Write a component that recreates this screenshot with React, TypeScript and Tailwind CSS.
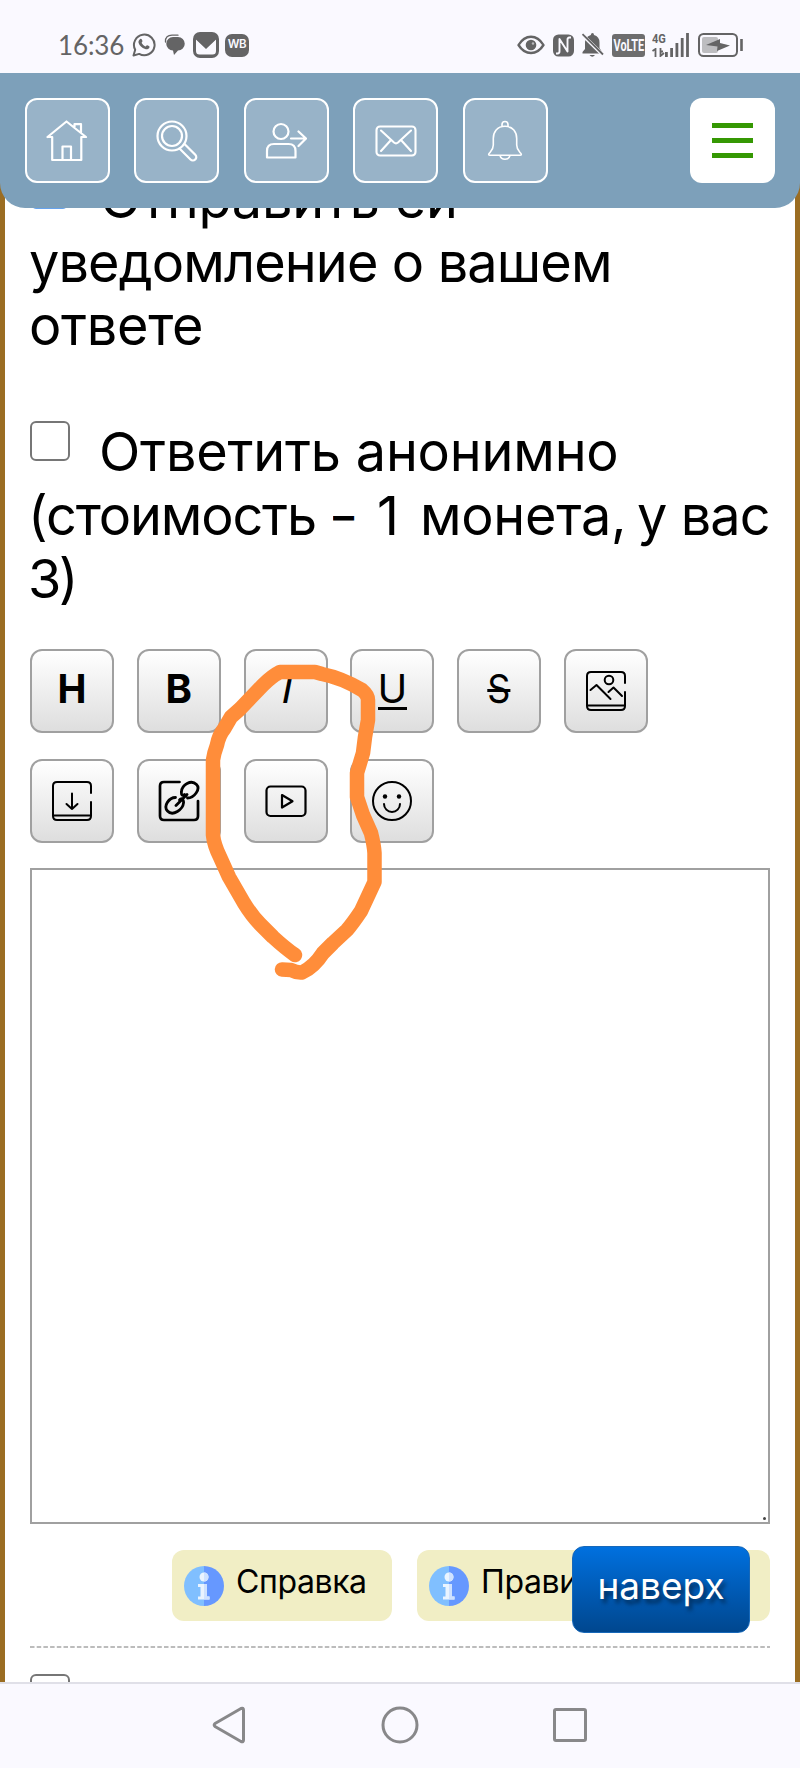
import React from "react";

const ico = {
  fill: "none",
  stroke: "currentColor",
  strokeLinecap: "round" as const,
  strokeLinejoin: "round" as const,
};

function StatusBar() {
  return (
    <div className="flex h-[73px] shrink-0 items-end justify-between bg-[#faf9ff] pb-[13px] pl-[58px] pr-[56px] text-[#646465]">
      <div className="flex h-[30px] items-center">
        <span className="w-[74px] whitespace-nowrap font-['Lato'] text-[26px] leading-[30px] tracking-[-0.1px]">16:36</span>
        <svg className="h-[26px] w-[24px]" viewBox="0 0 24 26">
          <path {...ico} strokeWidth="2" d="M1.5 23.5 L3.2 17.8 A10.3 10.3 0 1 1 7.2 21.9 Z" />
          <path
            fill="currentColor"
            d="M8.2 7 C9.2 6.2 9.8 7 10.4 8.8 C10.8 9.8 9.4 10.4 9.7 11 C10.5 12.6 11.8 13.7 13.3 14.4 C14 14.6 14.5 13 15.2 13.2 C17.2 14 17.8 14.4 17.5 15.2 C17 17 15 17.7 13.2 17.1 C9.7 16 7.6 13.6 6.6 11 C6.1 9.4 7 7.7 8.2 7 Z"
          />
        </svg>
        <svg className="ml-[8px] h-[24px] w-[21px]" viewBox="0 0 21 24">
          <path fill="currentColor" d="M9 4 H14 A6 6 0 0 1 14 17.5 L10 22 L9 17.5 A6.7 6.7 0 0 1 9 4 Z" />
          <path {...ico} strokeWidth="1.3" d="M1.5 9 C1 4 4 2.3 8 2.2 H14" />
        </svg>
        <svg className="ml-[8px] h-[26px] w-[26px]" viewBox="0 0 26 26">
          <rect width="26" height="26" rx="7" fill="currentColor" />
          <path fill="#faf9ff" d="M3 7.5 L13 17 L23 7.5 V19 A3.5 3.5 0 0 1 19.5 22.5 H6.500 A3.500 3.500 0 0 1 3 19 Z" />
          <path fill="currentColor" d="M3 4 H23 V7 L14.200 15 Q13 16 11.800 15 L3 7 Z" />
        </svg>
        <span className="ml-[6px] flex h-[23px] w-[24px] items-center justify-center rounded-[7px] bg-[#646465] font-['Inter'] text-[11.5px] font-semibold tracking-[-0.5px] text-[#faf9ff]">
          WB
        </span>
      </div>
      <div className="flex h-[30px] items-center">
        <svg className="h-[20px] w-[28px]" viewBox="0 0 28 20">
          <path {...ico} strokeWidth="2.400" d="M1.500 10 Q6.500 1.700 14 1.700 T26.500 10 Q21.500 18 14 18 T1.500 10 Z" />
          <circle cx="14" cy="10" r="5.300" fill="currentColor" />
          <circle cx="16" cy="8.500" r="1.200" fill="#b9b9bd" />
        </svg>
        <svg className="ml-[8px] h-[23px] w-[21px]" viewBox="0 0 21 23">
          <rect width="21" height="22" y="0.500" rx="5.500" fill="currentColor" />
          <path fill="none" stroke="#faf9ff" strokeWidth="1.900" strokeLinejoin="round" d="M3 19.500 H4.500 Q6.500 19.300 6.500 17.500 V5 L14.500 17.500 V5.500 Q14.500 3.700 16.500 3.500 H18" />
        </svg>
        <svg className="ml-[7px] h-[26px] w-[24px]" viewBox="0 0 24 26">
          <path fill="currentColor" d="M11.500 1 Q13 1 13 3 Q18.500 4.500 18.500 10.500 V16 L21 20 V21.500 H1.500 V20 L4 17 V10 Q4 5 9.800 3 Q10 1 11.500 1 Z M8.500 23 H14 Q11.300 26.500 8.500 23 Z" />
          <path stroke="#faf9ff" strokeWidth="3.600" d="M1 2.500 L23 24" />
          <path stroke="currentColor" strokeWidth="1.800" d="M1.500 2.200 L22 22.500" />
        </svg>
        <span className="ml-[7px] flex h-[23px] w-[33px] items-center justify-center rounded-[3px] bg-[#6d6d6e]">
          <span className="scale-x-[0.64] font-['Roboto'] text-[17px] font-bold leading-none text-[#faf9ff]">VoLTE</span>
        </span>
        <div className="ml-[7px] flex h-[24px] w-[37px] items-end">
          <div className="flex h-[24px] w-[13px] flex-col justify-between">
            <span className="origin-left scale-x-[0.85] font-['Roboto'] text-[13px] font-bold leading-[11px]">4G</span>
            <svg className="h-[9px] w-[13px]" viewBox="0 0 13 9">
              <path fill="none" stroke="currentColor" strokeWidth="1.800" d="M0.500 3 L3.500 1 V9 M8.500 0 V8 L12 5 M8.500 3.500 H11" />
            </svg>
          </div>
          <svg className="h-[24px] w-[24px]" viewBox="0 0 24 24">
            <path stroke="currentColor" strokeWidth="2.800" d="M1.400 24 V19 M6.600 24 V15 M11.900 24 V10 M17.200 24 V5 M22.500 24 V0" />
          </svg>
        </div>
        <svg className="ml-[9px] h-[24px] w-[46px]" viewBox="0 0 46 24">
          <rect x="1" y="1" width="38" height="22" rx="4.500" fill="none" stroke="currentColor" strokeWidth="2" />
          <rect x="4" y="4" width="16" height="16" rx="2" fill="#bdbdc0" />
          <path fill="currentColor" d="M8 12 L22 6 L22 10 L32 12.500 L19 18 L19.500 13.500 Z" />
          <path stroke="currentColor" strokeWidth="2.600" d="M43.500 6 V18" />
        </svg>
      </div>
    </div>
  );
}

const headIcons = [
  <svg key="home" className="h-[42px] w-[42px]" viewBox="0 0 42 42">
    <path {...ico} strokeWidth="2.200" d="M6.200 17 V40 H35.300 V17 M1.500 17 L20.500 1.500 L40 17 H35.300 M1.500 17 H6.200 M28.500 8 V4.200 H35 V13 M16.500 40 V26.500 H25 V40" />
  </svg>,
  <svg key="search" className="h-[42px] w-[42px]" viewBox="0 0 42 42">
    <circle {...ico} strokeWidth="2.200" cx="16" cy="16" r="14.500" />
    <circle {...ico} strokeWidth="2.200" cx="16" cy="16" r="10" />
    <path {...ico} strokeWidth="2.200" d="M23.500 28.500 L34.500 39.500 A3.200 3.200 0 0 0 39.300 34.800 L28.500 24" />
  </svg>,
  <svg key="user" className="h-[42px] w-[42px]" viewBox="0 0 42 42">
    <circle {...ico} strokeWidth="2.200" cx="16" cy="11.500" r="7.500" />
    <path {...ico} strokeWidth="2.200" d="M2 37.500 V31 Q2 24 9 24 H23.500 Q30.500 24 30.500 31 V37.500 Z M26 18.500 H41 M33.500 11.500 L41 18.500 L33.500 26" />
  </svg>,
  <svg key="mail" className="h-[42px] w-[42px]" viewBox="0 0 42 42">
    <rect {...ico} strokeWidth="2.100" x="1.500" y="6.500" width="39" height="29" rx="3.500" />
    <path {...ico} strokeWidth="2.100" d="M6 10.500 L19 22.500 Q21 24.200 23 22.500 L36 10.500 M6 31 L16 20 M36 31 L26 20" />
  </svg>,
  <svg key="bell" className="h-[42px] w-[42px]" viewBox="0 0 42 42">
    <path {...ico} strokeWidth="1.600" d="M18 6.500 V4.500 A3 3 0 0 1 24 4.500 V6.500 M21 6.300 C13 6.300 9.300 12 9.300 18.500 V25 C9.300 29.500 7.500 30.800 5.500 33 C4.200 34.500 4.600 35.200 6 35.200 H36 C37.400 35.200 37.800 34.500 36.500 33 C34.500 30.800 32.700 29.500 32.700 25 V18.500 C32.700 12 29 6.300 21 6.300 Z M16 35.500 A5.200 5.200 0 0 0 26 35.500" />
  </svg>,
];

function Header() {
  return (
    <header className="absolute inset-x-0 top-0 z-10 flex h-[135px] items-center justify-between rounded-b-[25px] bg-[#7da0ba] px-[25px]">
      <div className="flex gap-[24.900px] text-white">
        {headIcons.map((icon, i) => (
          <button key={i} className="flex size-[84.600px] items-center justify-center rounded-[12px] border-2 border-white bg-[#98b3c8]">
            {icon}
          </button>
        ))}
      </div>
      <button className="flex size-[85px] flex-col items-center justify-center gap-[10px] rounded-[12px] bg-white">
        <span className="h-[5px] w-[41px] bg-[#359803]" />
        <span className="h-[5px] w-[41px] bg-[#359803]" />
        <span className="h-[5px] w-[41px] bg-[#359803]" />
      </button>
    </header>
  );
}

const tools = [
  <span key="h" className="mb-[4px] scale-x-[0.97] font-['Inter'] text-[40px] font-bold leading-none">H</span>,
  <span key="b" className="mb-[4px] font-['Inter'] text-[40px] font-bold leading-none">B</span>,
  <span key="i" className="mb-[3px] ml-[3px] font-['Liberation_Sans'] text-[41px] italic leading-none">I</span>,
  <span key="u" className="mb-[3px] border-b-[3px] border-black font-['Inter'] text-[40px] leading-[37px]">U</span>,
  <span key="s" className="mb-[4px] scale-x-[0.9] font-['Inter'] text-[40px] leading-none line-through decoration-[3px]">S</span>,
  <svg key="img" className="h-[42px] w-[42px]" viewBox="0 0 42 42">
    <path {...ico} strokeWidth="2" d="M40 13 V6 Q40 2 36 2 H6 Q2 2 2 6 V36 Q2 40 6 40 H36 Q40 40 40 36 V22 M2 35.500 H40 M5.500 20 L11.500 15 L25.500 29 M23.500 22 L28.500 17.500 L37 26" />
    <circle {...ico} strokeWidth="2" cx="24" cy="10" r="4.300" />
  </svg>,
  <svg key="down" className="h-[42px] w-[42px]" viewBox="0 0 42 42">
    <path {...ico} strokeWidth="2" d="M40 13 V6 Q40 2 36 2 H6 Q2 2 2 6 V36 Q2 40 6 40 H36 Q40 40 40 36 V22 M2 35.500 H40 M21 13.500 V29 M15.500 24 L21 29 L26.500 24" />
  </svg>,
  <svg key="link" className="h-[42px] w-[42px]" viewBox="0 0 42 42">
    <path {...ico} strokeWidth="2.700" d="M21.500 2 H6 Q2 2 2 6 V36 Q2 40 6 40 H36 Q40 40 40 36 V21" />
    <path {...ico} strokeWidth="2.800" d="M17.500 17.500 C11 17.500 5 26 9.500 31 C15 37 25 29 25.500 23 C26 20 23.500 17 21.500 20 M29.500 18 C36 18 43 9 38.500 4.500 C33 -1 24 5 23.500 11.500 C23 15 24.500 16.500 26.500 14.500 M18 25.500 L29 14.500" />
  </svg>,
  <svg key="play" className="h-[42px] w-[42px]" viewBox="0 0 42 42">
    <rect {...ico} strokeWidth="2.200" x="1.500" y="6.500" width="39" height="29.500" rx="4" />
    <path {...ico} strokeWidth="2.200" d="M17 15 L27.500 21.200 L17 27.500 Z" />
  </svg>,
  <svg key="smile" className="h-[42px] w-[42px]" viewBox="0 0 42 42">
    <circle {...ico} strokeWidth="2" cx="21" cy="21" r="19" />
    <path {...ico} strokeWidth="2" d="M13 24 A8 8 0 0 0 29 24" />
    <circle cx="14" cy="16.500" r="2.200" />
    <circle cx="28" cy="16.500" r="2.200" />
  </svg>,
];

function Tool({ children }: { children: React.ReactNode }) {
  return (
    <button className="flex size-[84px] items-center justify-center rounded-[12px] border-2 border-[#a0a0a0] bg-linear-to-b from-white to-[#dedede]">
      {children}
    </button>
  );
}

function Info({ text, wide }: { text: string; wide?: boolean }) {
  return (
    <div className={wide ? "flex h-[71px] w-[353px] items-center overflow-hidden rounded-[12px] bg-[#f1eec5] pl-[12px]" : "flex h-[71px] w-[220px] items-center rounded-[12px] bg-[#f1eec5] pl-[12px]"}>
      <svg className="h-[40px] w-[40px] shrink-0" viewBox="0 0 40 40">
        <path fill="#80bfff" d="M20 0 A20 20 0 0 0 20 40 Z" />
        <path fill="#6698ff" d="M20 0 A20 20 0 0 1 20 40 Z" />
        <circle cx="20" cy="11" r="4.500" fill="#eaf4ff" />
        <path fill="#eaf4ff" d="M14 18 H23 V30.500 H25.500 V33.500 H14 V30.500 H16.500 V21 H14 Z" />
        <path fill="#cfe2ff" d="M20 6.500 A4.500 4.500 0 0 1 20 15.500 Z M20 18 H23 V30.500 H25.500 V33.500 H20 Z" />
      </svg>
      <span className="mb-[8px] ml-[12px] whitespace-nowrap font-['Inter'] text-[32px] leading-[40px] tracking-[-0.4px]">{text}</span>
    </div>
  );
}

export default function App() {
  return (
    <div className="flex h-[1768px] w-[800px] flex-col overflow-hidden bg-white font-['Inter',sans-serif] text-black">
      <StatusBar />
      <div className="relative h-[1609px] shrink-0">
        <Header />
        <main className="flex h-[1609px] flex-col overflow-hidden border-x-[5px] border-[#9b6d22] bg-white pl-[25px] pr-[25px] pt-[94px] *:shrink-0">
          <div className="flex h-[191px] flex-col whitespace-nowrap text-[54px] leading-[63.500px]">
            <div className="flex items-start">
              <span className="ml-[1px] mr-[32px] h-[42px] w-[37px] shrink-0 rounded-[5px] bg-[#66a3ee]" />
              <span className="tracking-[-0.200px]">Отправить ей</span>
            </div>
            <span className="-ml-[1px] tracking-[-0.870px]">уведомление о вашем</span>
            <span className="-ml-[1px] tracking-[-0.300px]">ответе</span>
          </div>
          <div className="mt-[62px] flex h-[191px] flex-col whitespace-nowrap text-[54px] leading-[63.500px]">
            <div className="flex items-start">
              <span className="mr-[29px] mt-[1px] h-[40px] w-[40px] shrink-0 rounded-[6px] border-2 border-[#767676] bg-white" />
              <span className="tracking-[-0.200px]">Ответить анонимно</span>
            </div>
            <div className="-ml-[2px] flex">
              <span className="w-[305px] tracking-[-1.150px]">(стоимость</span>
              <span className="w-[44px] origin-left scale-x-[0.78]">–</span>
              <span className="w-[43px]">1</span>
              <span className="w-[217px] tracking-[-0.300px]">монета,</span>
              <span className="tracking-[-0.900px]">у вас</span>
            </div>
            <span className="-ml-[2px] tracking-[-2.500px]">3)</span>
          </div>
          <div className="mt-[38px] flex w-[700px] flex-wrap gap-x-[22.800px] gap-y-[26px]">
            {tools.map((t, i) => (
              <Tool key={i}>{t}</Tool>
            ))}
          </div>
          <div className="mt-[25px] flex h-[656px] w-[740px] items-end justify-end border-2 border-[#a0a0a0] p-[2px]">
            <span className="size-[3px] rounded-full bg-[#444]" />
          </div>
          <div className="mt-[26px] flex w-[740px] justify-end gap-[25px]">
            <Info text="Справка" />
            <Info text="Прави" wide />
          </div>
          <svg className="mt-[25px] h-[2px] w-[740px]" viewBox="0 0 740 2">
            <path d="M0 1 H740" stroke="#bcbcbc" strokeWidth="2" strokeDasharray="4.500 2.200" />
          </svg>
          <span className="mt-[26px] h-[40px] w-[40px] rounded-[6px] border-2 border-[#767676] bg-white" />
        </main>
        <button className="absolute left-[572px] top-[1473px] flex h-[87px] w-[178px] items-center justify-center rounded-[12px] border border-[#1768b9] bg-linear-to-b from-[#0070df] to-[#00478f] pb-[8px] text-[37px] text-white [text-shadow:3px_4px_4px_rgba(0,0,0,0.5)]">
          наверх
        </button>
        <svg className="pointer-events-none absolute left-0 top-0 h-[1000px] w-[800px]" viewBox="0 73 800 1000">
          <path
            fill="none"
            stroke="#ff8d3a"
            strokeWidth="14.500"
            strokeLinecap="round"
            strokeLinejoin="round"
            d="M295 955 Q285 948 273 937 L260 924 Q252 916 244 903 L229 877 L220 857 Q214 845 213 835 V760 Q214 753 217 745 Q219 735 224 729 L231 717 L240 709 L263 685 Q272 676 280 672 H315 L322 674 Q342 678 362 690 Q368 695 368 700 V720 L365 737 L363 753 L357 773 V797 L363 815 L371 833 Q374 845 374.500 853 V882 L361 911 Q353 923 347 930 L333 943 L323 953 Q314 967 302 972.500 Q297 973 291 970 L282 969.500"
          />
        </svg>
      </div>
      <nav className="flex h-[86px] shrink-0 items-center border-t-2 border-[#e0e0e8] bg-[#faf9ff] pb-[2px] pl-[212px] text-[#88888a]">
        <svg className="h-[38px] w-[34px]" viewBox="0 0 34 38">
          <path {...ico} strokeWidth="3" d="M29 2.500 Q31.500 1.500 31.500 4 V34 Q31.500 36.500 29 35.500 L3 20.500 Q1.500 19 3 17.500 Z" />
        </svg>
        <svg className="ml-[135px] h-[38px] w-[38px]" viewBox="0 0 38 38">
          <circle {...ico} strokeWidth="3" cx="19" cy="19" r="17" />
        </svg>
        <span className="ml-[134px] size-[34px] rounded-[3px] border-3 border-[#88888a]" />
      </nav>
    </div>
  );
}
